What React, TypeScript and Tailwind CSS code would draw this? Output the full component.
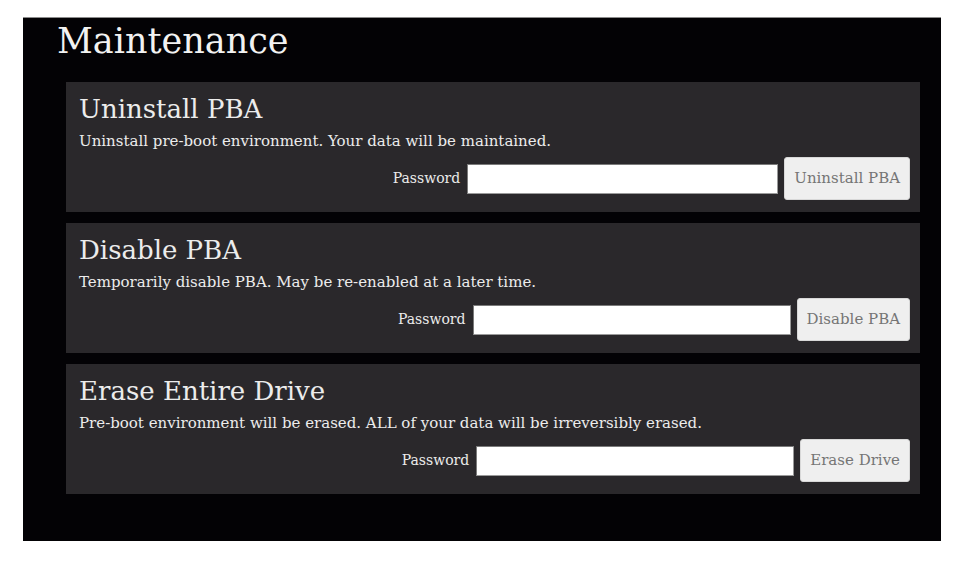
const cards = [
  {
    title: "Uninstall PBA",
    desc: "Uninstall pre-boot environment. Your data will be maintained.",
    button: "Uninstall PBA",
    inputW: "w-[311px]",
  },
  {
    title: "Disable PBA",
    desc: "Temporarily disable PBA. May be re-enabled at a later time.",
    button: "Disable PBA",
    inputW: "w-[318px]",
  },
  {
    title: "Erase Entire Drive",
    desc: "Pre-boot environment will be erased. ALL of your data will be irreversibly erased.",
    button: "Erase Drive",
    inputW: "w-[318px]",
  },
];

function ActionCard({ title, desc, button, inputW }: (typeof cards)[number]) {
  return (
    <div className="bg-[#2a282b] pl-[13px] pr-[10px] pt-[11px] pb-[12px] text-[#ececec]">
      <h2 className="text-[26px] leading-[32px]">{title}</h2>
      <p className="text-[15px] leading-[20px] mt-[6px]">{desc}</p>
      <div className="flex items-center justify-end mt-[6px]">
        <label className="text-[14px] mr-[7px]">Password</label>
        <input
          type="password"
          className={`${inputW} h-[30px] bg-white border border-[#9a9a9a] border-t-[#7a7a7a] border-l-[#7a7a7a] outline-none`}
        />
        <button className="ml-[6px] h-[43px] px-[9px] bg-[#efefef] text-[#757575] text-[15px] rounded-[3px] border border-[#d8d8d8]">
          {button}
        </button>
      </div>
    </div>
  );
}

export default function App() {
  return (
    <div className="w-[970px] h-[564px] bg-white pt-[17px] pl-[23px] font-['DejaVu_Serif',serif]">
      <div className="w-[918px] h-[524px] bg-[#030205] border-t border-[#8c8c8c]">
        <h1 className="text-[35px] leading-[44px] text-[#f2f2f2] pl-[34px] pt-[1px]">Maintenance</h1>
        <div className="flex flex-col gap-[11px] pl-[43px] pr-[21px] mt-[19px]">
          {cards.map((c) => (
            <ActionCard key={c.title} {...c} />
          ))}
        </div>
      </div>
    </div>
  );
}
